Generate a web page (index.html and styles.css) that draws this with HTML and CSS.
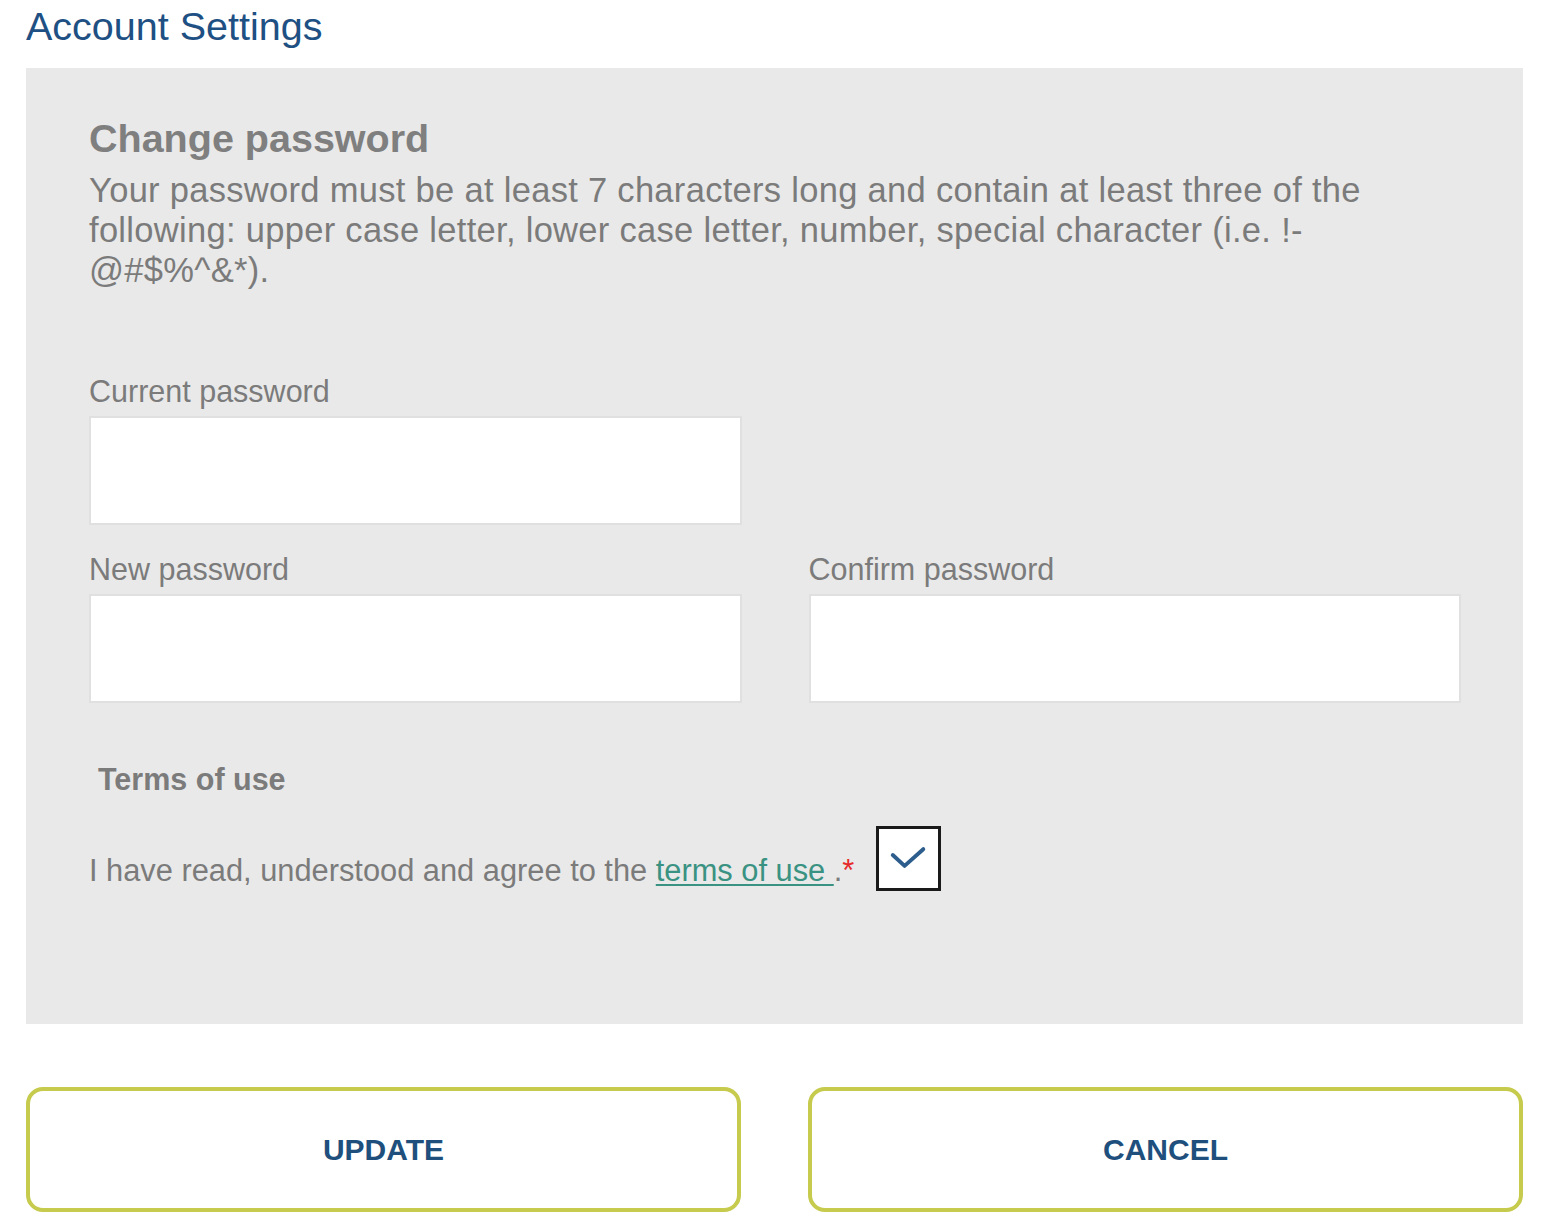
FILE: index.html
```html
<!DOCTYPE html>
<html lang="en">
<head>
<meta charset="utf-8">
<title>Account Settings</title>
<link rel="stylesheet" href="styles.css">
</head>
<body>
<div class="page">
  <h1 class="page-title">Account Settings</h1>
  <section class="panel">
    <h2 class="panel-title">Change password</h2>
    <p class="hint">Your password must be at least 7 characters long and contain at least three of the following: upper case letter, lower case letter, number, special character (i.e. !-@#$%^&amp;*).</p>
    <div class="fields">
      <div class="field">
        <label class="field-label" for="cur">Current password</label>
        <input class="field-input" id="cur" type="password">
      </div>
      <div class="field"></div>
      <div class="field">
        <label class="field-label" for="new">New password</label>
        <input class="field-input" id="new" type="password">
      </div>
      <div class="field">
        <label class="field-label" for="conf">Confirm password</label>
        <input class="field-input" id="conf" type="password">
      </div>
    </div>
    <h3 class="terms-title">Terms of use</h3>
    <div class="agree-row">
      <span class="agree-text">I have read, understood and agree to the <a class="terms-link" href="#">terms of use </a>.<span class="req">*</span></span>
      <span class="checkbox">
        <svg width="60" height="60" viewBox="0 0 60 60" aria-hidden="true"><polyline points="14,26 26,37 45,20" fill="none" stroke="#2c5d8c" stroke-width="4" stroke-linecap="round" stroke-linejoin="round"/></svg>
      </span>
    </div>
  </section>
  <div class="actions">
    <button class="btn" type="button">UPDATE</button>
    <button class="btn" type="button">CANCEL</button>
  </div>
</div>
</body>
</html>
```
FILE: styles.css
```css
html, body {
  margin: 0;
  padding: 0;
  background: #ffffff;
}
body {
  font-family: "Liberation Sans", Arial, sans-serif;
  color: #7b7b7b;
}
.page {
  padding: 3px 23px 0 26px;
}
.page-title {
  margin: 0 0 19px 0;
  font-size: 39.5px;
  line-height: 46px;
  font-weight: normal;
  color: #1e5083;
}
.panel {
  background: #e9e9e9;
  padding: 46px 62px 133px 63px;
}
.panel-title {
  margin: 0;
  font-size: 39.5px;
  line-height: 48px;
  font-weight: bold;
  color: #7f7f7f;
}
.hint {
  margin: 8px 0 0 0;
  font-size: 34.5px;
  line-height: 40px;
  letter-spacing: 0.3px;
  color: #7b7b7b;
}
.fields {
  margin-top: 83px;
  display: grid;
  grid-template-columns: 1fr 1fr;
  column-gap: 67px;
  row-gap: 26px;
}
.field {
  display: flex;
  flex-direction: column;
  gap: 7px;
}
.field-label {
  font-size: 30.5px;
  line-height: 36px;
  color: #7b7b7b;
}
.field-input {
  box-sizing: border-box;
  width: 100%;
  height: 109px;
  margin: 0;
  border: 2px solid #e0e0e0;
  background: #ffffff;
  outline: none;
}
.terms-title {
  margin: 58px 0 0 9px;
  font-size: 30.5px;
  line-height: 36px;
  font-weight: bold;
  color: #7b7b7b;
}
.agree-row {
  margin-top: 29px;
  display: flex;
  align-items: flex-end;
  gap: 22px;
}
.agree-text {
  font-size: 30.8px;
  line-height: 40px;
  color: #7b7b7b;
}
.terms-link {
  color: #3a9282;
  text-decoration: underline;
  text-decoration-thickness: 2px;
  text-underline-offset: 3px;
}
.req {
  color: #e52b2b;
}
.checkbox {
  box-sizing: border-box;
  width: 65px;
  height: 65px;
  border: 3px solid #1a1a1a;
  background: #ffffff;
  display: flex;
  align-items: center;
  justify-content: center;
}
.checkbox svg {
  display: block;
}
.actions {
  margin-top: 63px;
  display: grid;
  grid-template-columns: 1fr 1fr;
  column-gap: 67px;
}
.btn {
  box-sizing: border-box;
  height: 125px;
  border: 4px solid #c6cb4e;
  border-radius: 17px;
  background: #ffffff;
  font-family: "Liberation Sans", Arial, sans-serif;
  font-size: 30px;
  font-weight: bold;
  color: #1e4f7d;
  cursor: pointer;
}
```
